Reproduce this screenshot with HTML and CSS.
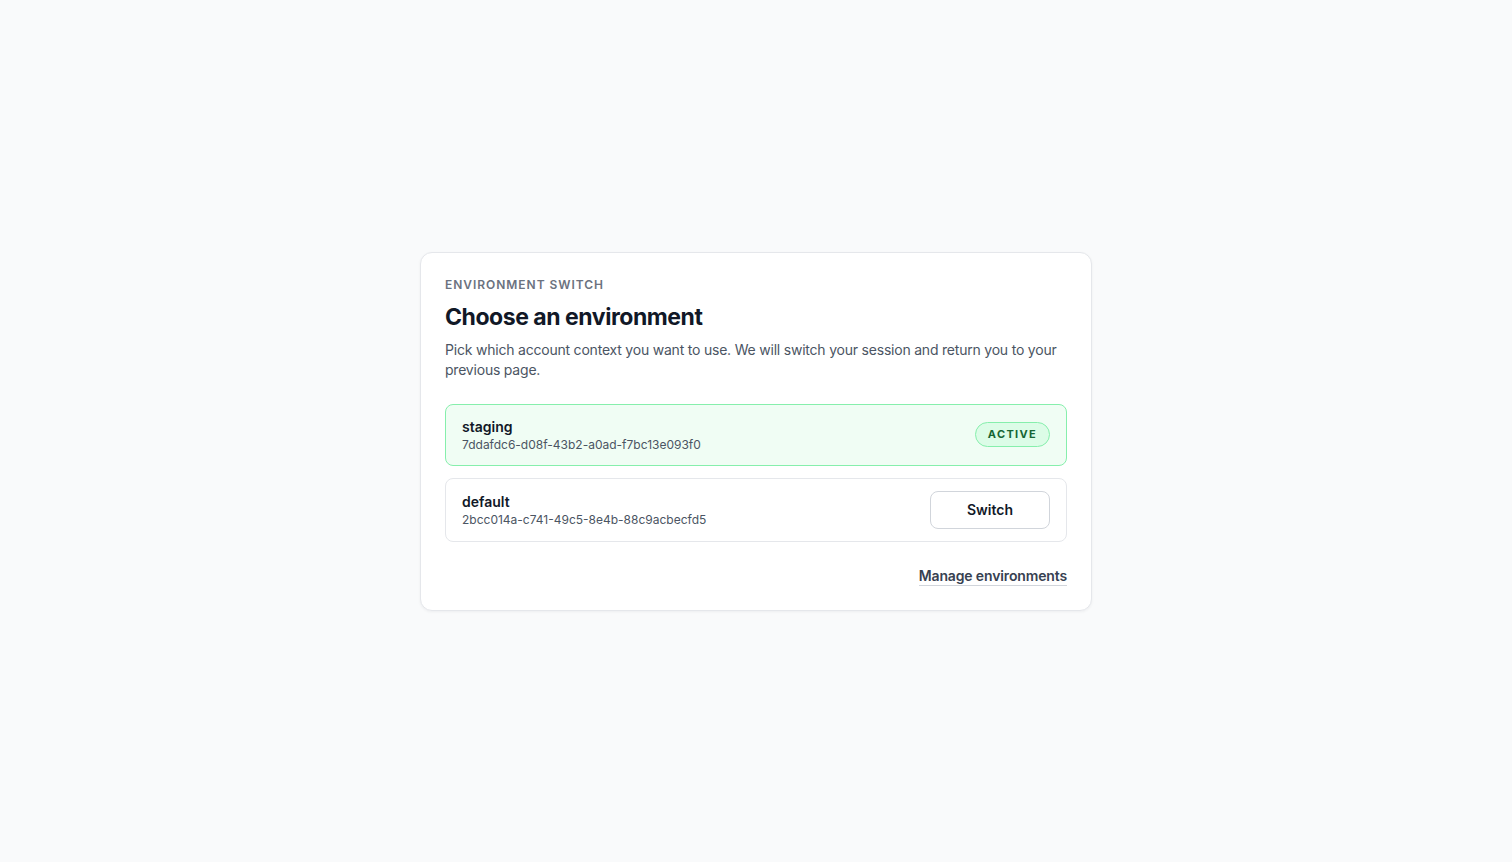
FILE: index.html
```html
<!DOCTYPE html>
<html lang="en">
<head>
  <meta charset="UTF-8">
  <meta name="viewport" content="width=device-width, initial-scale=1.0">
  <title>Environment switch</title>
  <link rel="stylesheet" href="styles.css">
</head>
<body>
<main class="page">
  <section class="switch-card">
    <div class="eyebrow">Environment switch</div>
    <h1>Choose an environment</h1>
    <p class="lead">Pick which account context you want to use. We will switch your session and return you to your previous page.</p>

    <ul class="env-list">
      <li class="env active">
        <div class="env-info">
          <div class="env-name">staging</div>
          <div class="env-id">7ddafdc6-d08f-43b2-a0ad-f7bc13e093f0</div>
        </div>
        <span class="badge">Active</span>
      </li>
      <li class="env">
        <div class="env-info">
          <div class="env-name">default</div>
          <div class="env-id">2bcc014a-c741-49c5-8e4b-88c9acbecfd5</div>
        </div>
        <button class="switch-btn">Switch</button>
      </li>
    </ul>

    <div class="footer">
      <a href="#" class="manage-link">Manage environments</a>
    </div>
  </section>
</main>
</body>
</html>
```

FILE: styles.css
```css
* { box-sizing: border-box; }

body {
  margin: 0;
  font-family: Inter, "Noto Sans", sans-serif;
  background: #f9fafb;
  color: #111827;
}

.page {
  min-height: 100vh;
  display: flex;
  align-items: center;
  justify-content: center;
}

.switch-card {
  width: 672px;
  background: #fff;
  border: 1px solid #e5e7eb;
  border-radius: 12px;
  box-shadow: 0 1px 3px rgba(17, 24, 39, 0.05);
  padding: 24px;
}

.eyebrow {
  font-size: 12px;
  line-height: 16px;
  font-weight: 600;
  letter-spacing: 0.08em;
  text-transform: uppercase;
  color: #6b7280;
}

.switch-card h1 {
  margin: 8px 0 0;
  font-size: 23px;
  line-height: 32px;
  font-weight: 700;
  letter-spacing: -0.02em;
  color: #111827;
}

.lead {
  margin: 7px 0 0;
  font-size: 14px;
  line-height: 20px;
  letter-spacing: -0.015em;
  color: #4b5563;
}

.env-list {
  list-style: none;
  margin: 24px 0 0;
  padding: 0;
  display: flex;
  flex-direction: column;
  gap: 12px;
}

.env {
  display: flex;
  align-items: center;
  justify-content: space-between;
  padding: 12px 16px;
  border: 1px solid #e5e7eb;
  border-radius: 8px;
  background: #fff;
}

.env.active {
  background: #f0fdf4;
  border-color: #86efac;
}

.env-name {
  font-size: 14px;
  line-height: 20px;
  font-weight: 600;
  color: #111827;
}

.env-id {
  font-size: 12px;
  line-height: 16px;
  color: #4b5563;
}

.badge {
  display: inline-block;
  padding: 4px 12px;
  border: 1px solid #86efac;
  border-radius: 999px;
  background: #dcfce7;
  color: #166534;
  font-size: 11px;
  line-height: 15px;
  font-weight: 700;
  letter-spacing: 0.12em;
  text-transform: uppercase;
}

.switch-btn {
  width: 120px;
  height: 38px;
  border: 1px solid #d1d5db;
  border-radius: 8px;
  background: #fff;
  color: #111827;
  font-family: inherit;
  font-size: 14px;
  font-weight: 600;
  cursor: pointer;
}

.switch-btn:hover { background: #f9fafb; }

.footer {
  margin-top: 24px;
  display: flex;
  justify-content: flex-end;
}

.manage-link {
  font-size: 14px;
  line-height: 19px;
  font-weight: 600;
  letter-spacing: -0.01em;
  color: #374151;
  text-decoration: none;
  border-bottom: 1px solid #d1d5db;
}
```
